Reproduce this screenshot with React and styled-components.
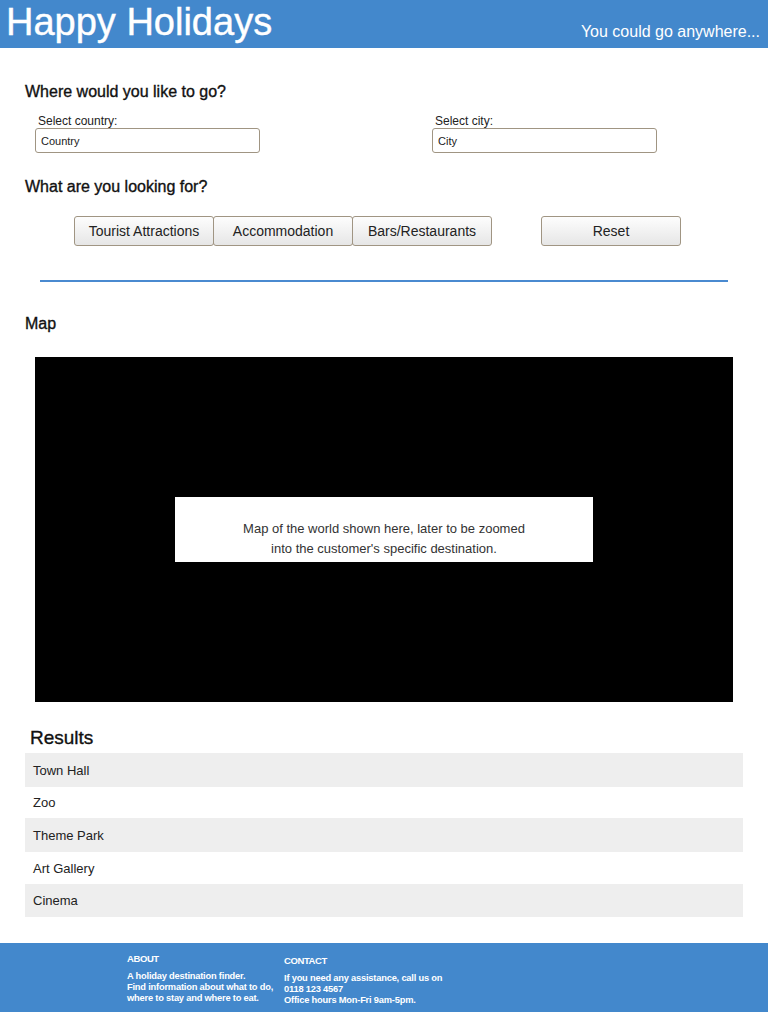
import React from 'react';
import styled, { createGlobalStyle } from 'styled-components';

const GlobalStyle = createGlobalStyle`
  body {
    margin: 0;
    background: #fff;
    font-family: "Liberation Sans", Arial, sans-serif;
  }
`;

const Page = styled.div`
  width: 768px;
  min-height: 1012px;
  display: flex;
  flex-direction: column;
`;

const Header = styled.header`
  height: 48px;
  background: #4388cc;
  display: flex;
  justify-content: space-between;
  align-items: flex-end;
  padding: 0 8px 0 6px;
`;

const Title = styled.h1`
  margin: 0;
  align-self: flex-start;
  color: #fff;
  font-weight: normal;
  font-size: 38px;
  line-height: 44px;
  -webkit-text-stroke: 0.4px #fff;
`;

const Tagline = styled.span`
  color: #fff;
  font-size: 16px;
  line-height: 20px;
  padding-bottom: 6px;
`;

const Main = styled.main`
  padding: 34px 25px 0 25px;
  flex: 1;
`;

const Heading = styled.h2`
  margin: 0;
  font-weight: normal;
  font-size: ${({ size }) => size || 16}px;
  line-height: ${({ size }) => (size ? size + 3 : 20)}px;
  color: #111;
  -webkit-text-stroke: 0.35px #111;
  padding-left: ${({ indent }) => indent || 0}px;
`;

const Fields = styled.div`
  display: grid;
  grid-template-columns: 397px 225px;
  padding: 12px 0 0 10px;
`;

const Field = styled.label`
  display: flex;
  flex-direction: column;
  font-size: 12px;
  color: #222;
  span {
    padding-left: 3px;
    line-height: 14px;
  }
`;

const Input = styled.input`
  box-sizing: border-box;
  width: 225px;
  height: 25px;
  margin: 0;
  border: 1px solid #a09583;
  border-radius: 3px;
  padding: 0 5px;
  font-family: "Liberation Sans", Arial, sans-serif;
  font-size: 11px;
  color: #222;
  &::placeholder {
    color: #222;
  }
`;

const LookingFor = styled.div`
  margin-top: 24px;
`;

const ButtonRow = styled.div`
  display: flex;
  padding: 19px 0 0 49px;
`;

const Button = styled.button`
  box-sizing: border-box;
  width: ${({ w }) => w || 140}px;
  height: 30px;
  margin: 0 0 0 ${({ gap }) => gap || 0}px;
  border: 1px solid #a09583;
  border-radius: 3px;
  background: linear-gradient(#fdfdfd, #e6e6e6);
  font-family: "Liberation Sans", Arial, sans-serif;
  font-size: 14px;
  color: #222;
  padding: 0 0 1px 0;
`;

const Rule = styled.hr`
  margin: 34px 15px 0 15px;
  border: none;
  height: 2px;
  background: #4a8ad0;
`;

const MapSection = styled.section`
  margin-top: 32px;
`;

const MapArea = styled.div`
  margin: 23px 10px 0 10px;
  height: 345px;
  background: #000;
  display: flex;
  align-items: center;
  justify-content: center;
`;

const MapNote = styled.div`
  width: 418px;
  height: 65px;
  background: #fff;
  box-sizing: border-box;
  padding-top: 22px;
  text-align: center;
  font-size: 13px;
  line-height: 20px;
  color: #333;
`;

const Results = styled.section`
  margin-top: 25px;
`;

const List = styled.ul`
  list-style: none;
  margin: 4px 0 0 0;
  padding: 0;
`;

const Row = styled.li`
  height: ${({ h }) => h}px;
  display: flex;
  align-items: center;
  padding-left: 8px;
  background: ${({ shade }) => (shade ? '#eeeeee' : '#fff')};
  font-size: 13px;
  color: #222;
`;

const Footer = styled.footer`
  margin-top: 26px;
  height: 69px;
  background: #4388cc;
  display: flex;
  padding-left: 127px;
  color: #fff;
`;

const FooterCol = styled.div`
  width: ${({ w }) => w}px;
  padding-top: ${({ top }) => top}px;
  h4 {
    margin: 0 0 6px 0;
    font-size: 9.5px;
    line-height: 12px;
    font-weight: bold;
    letter-spacing: -0.4px;
  }
  p {
    margin: 0;
    font-size: 9.3px;
    font-weight: bold;
    line-height: 11px;
    letter-spacing: -0.2px;
    white-space: nowrap;
  }
`;

const results = ['Town Hall', 'Zoo', 'Theme Park', 'Art Gallery', 'Cinema'];
const heights = [34, 31, 34, 32, 33];

const App = () => (
  <Page>
    <GlobalStyle />
    <Header>
      <Title>Happy Holidays</Title>
      <Tagline>You could go anywhere...</Tagline>
    </Header>
    <Main>
      <Heading>Where would you like to go?</Heading>
      <Fields>
        <Field>
          <span>Select country:</span>
          <Input placeholder="Country" />
        </Field>
        <Field>
          <span>Select city:</span>
          <Input placeholder="City" />
        </Field>
      </Fields>
      <LookingFor>
        <Heading>What are you looking for?</Heading>
        <ButtonRow>
          <Button>Tourist Attractions</Button>
          <Button w={140} gap={-1}>Accommodation</Button>
          <Button w={140} gap={-1}>Bars/Restaurants</Button>
          <Button gap={49}>Reset</Button>
        </ButtonRow>
      </LookingFor>
      <Rule />
      <MapSection>
        <Heading>Map</Heading>
        <MapArea>
          <MapNote>
            Map of the world shown here, later to be zoomed
            <br />
            into the customer's specific destination.
          </MapNote>
        </MapArea>
      </MapSection>
      <Results>
        <Heading size={19} indent={5}>Results</Heading>
        <List>
          {results.map((r, i) => (
            <Row key={r} shade={i % 2 === 0} h={heights[i]}>
              {r}
            </Row>
          ))}
        </List>
      </Results>
    </Main>
    <Footer>
      <FooterCol w={157} top={10}>
        <h4>ABOUT</h4>
        <p>
          A holiday destination finder.
          <br />
          Find information about what to do,
          <br />
          where to stay and where to eat.
        </p>
      </FooterCol>
      <FooterCol w={200} top={12}>
        <h4>CONTACT</h4>
        <p>
          If you need any assistance, call us on
          <br />
          0118 123 4567
          <br />
          Office hours Mon-Fri 9am-5pm.
        </p>
      </FooterCol>
    </Footer>
  </Page>
);

export default App;
